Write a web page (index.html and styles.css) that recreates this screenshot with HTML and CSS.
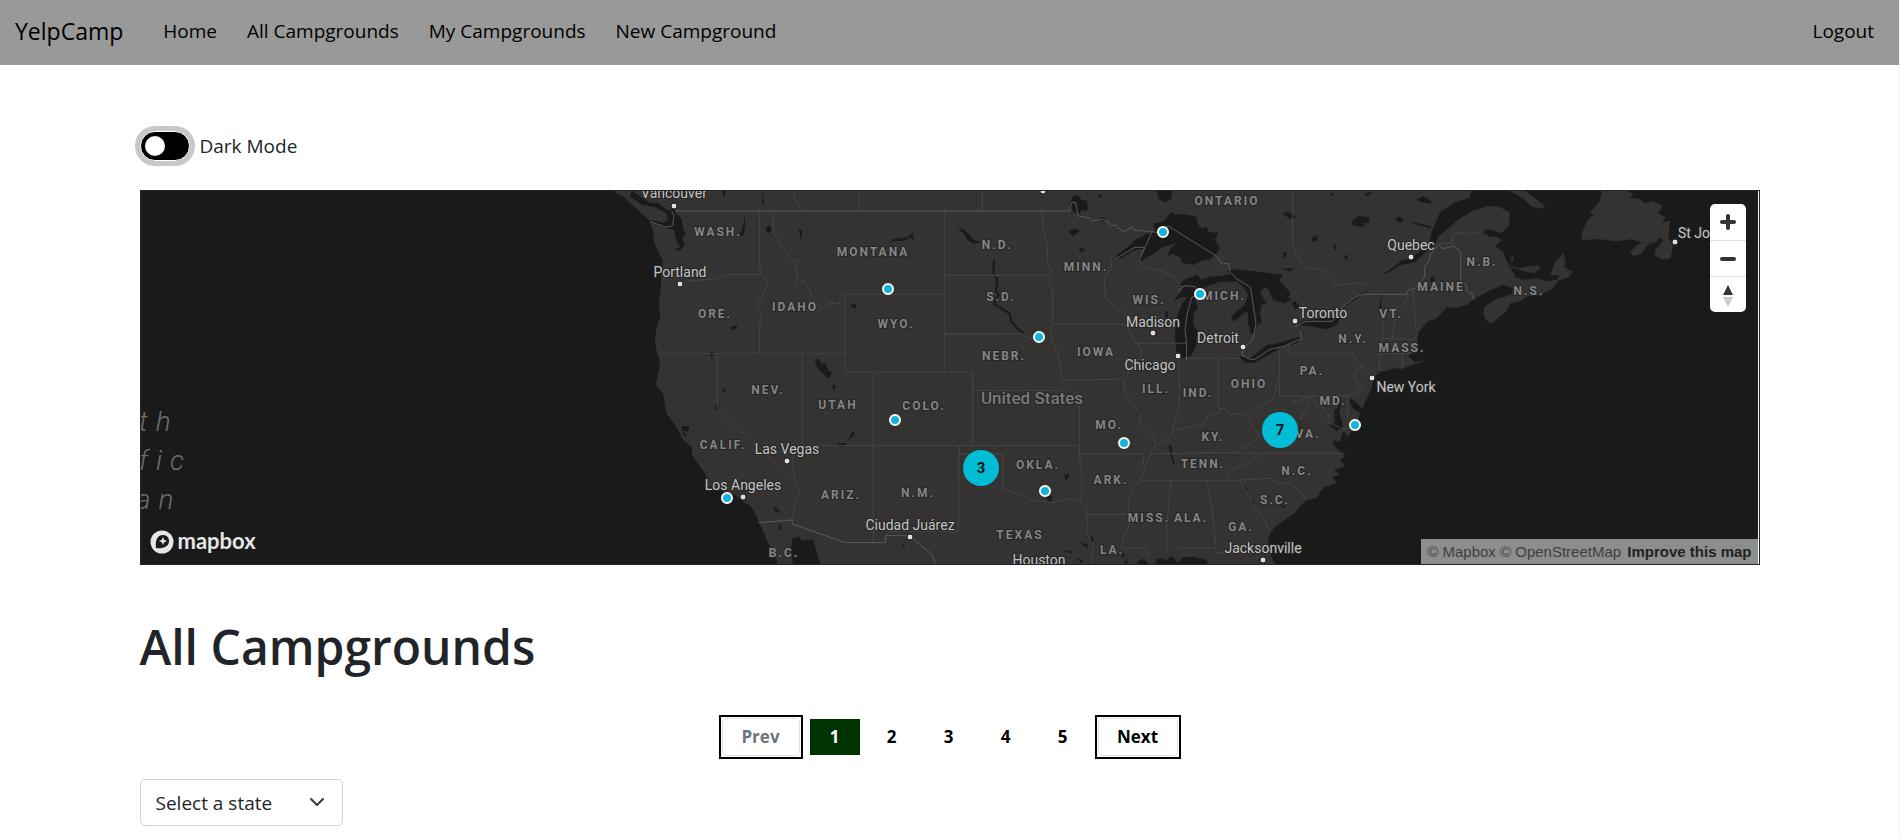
FILE: index.html
```html
<!DOCTYPE html>
<html lang="en">
<head>
<meta charset="utf-8">
<title>YelpCamp</title>
<link rel="stylesheet" href="styles.css">
</head>
<body>
<nav class="navbar">
  <a class="brand" href="#">YelpCamp</a>
  <a class="nav-link" href="#">Home</a>
  <a class="nav-link" href="#">All Campgrounds</a>
  <a class="nav-link" href="#">My Campgrounds</a>
  <a class="nav-link" href="#">New Campground</a>
  <a class="nav-link logout" href="#">Logout</a>
</nav>
<main class="container">
  <div class="mode">
    <input class="switch" type="checkbox" id="dark-mode">
    <label for="dark-mode">Dark Mode</label>
  </div>

  <section class="map" aria-label="Campground map">
    <svg class="map-canvas" width="1620" height="375" viewBox="140 190 1620 375">
      <!-- land -->
      <g class="land">
        <path d="M613 190L617 194L624 197L630 203L638 210L650 221L651 226L653 231L654 242L660 256L663 260L661 275L661 288L659 302L660 318L656 330L655 342L657 353L660 361L659 370L656 382L657 387L663 393L665 405L666 413L673 422L680 433L683 440L692 447L692 455L699 465L706 475L707 487L715 487L725 492L734 494L743 502L750 505L755 513L758 520L764 533L768 543L774 552L778 565H1275L1270 553L1268 540L1271 531L1278 525L1286 519L1295 513L1301 505L1307 500L1317 498L1321 491L1325 487L1337 483L1332 477L1340 475L1334 470L1345 466L1340 460L1346 455L1342 447L1345 440L1350 433L1357 427L1360 413L1352 408L1349 398L1356 402L1362 409L1367 398L1372 387L1373 380L1377 374L1390 371L1404 368L1427 360L1415 362L1408 356L1417 350L1418 333L1427 322L1437 318L1447 307L1456 308L1467 305L1472 300L1487 292L1507 283L1515 275L1510 268L1503 252L1495 246L1502 240L1490 234L1483 230L1500 234L1509 226L1510 213L1500 207L1488 206L1472 211L1458 220L1440 235L1429 244L1431 234L1440 212L1456 202L1469 198L1472 190Z"/>
        <g transform="translate(1400 180) scale(.3333)">
          <path d="M305 305L325 285L345 290L370 300L410 295L440 304L475 298L468 315L450 330L420 345L380 350L365 362L330 370L318 395L275 430L262 424L250 405L253 380L290 357L335 343L340 325L310 315ZM490 220L497 245L492 262L518 275L505 292L470 304L478 285L450 287L465 245ZM336 224L342 240L330 246L334 258L355 264L418 256L420 264L402 280L372 274L330 260ZM325 32H375L400 50L436 78L430 86L395 80L370 55ZM605 32L600 60L590 75L570 98L580 106L565 118L545 160L546 180L600 178L650 184L695 178L725 187L705 200L690 218L700 228L725 222L738 200L752 190L770 186L775 172L790 180L764 212L765 228L790 240L812 235L820 190L805 175L810 122L785 128L797 112L775 100L788 78L760 62L735 70L720 58L690 52L700 42L680 32Z"/>
        </g>
      </g>
      <!-- lakes, rivers and gulfs -->
      <g class="water">
        <path transform="translate(600 180) scale(.3333)" d="M580 1155L572 1110L578 1075L600 1070L605 1082L640 1078L650 1118L662 1155ZM95 32L130 56L150 68L175 70L205 92L222 80L230 105L245 115L250 150L256 158L247 175L254 195L240 212L222 208L240 200L228 180L222 150L200 145L155 130L150 120L190 128L205 118L200 100L165 82L125 74L90 50ZM368 35L378 32L370 58ZM485 32L494 76L487 70ZM498 140L510 135L515 150L508 160L498 156ZM596 150L608 152L603 180ZM434 108L436 140L430 168L416 164L428 145ZM866 190L880 178L925 172L938 157L942 184L932 172L915 182L880 184ZM1072 148L1090 148L1112 166L1120 180L1144 186L1122 191L1102 180L1090 158ZM645 542L655 535L665 552L678 548L684 570L697 578L683 596L660 572L650 560ZM696 614L708 616L702 632ZM365 620L378 630L374 643ZM330 515L340 516L336 536ZM346 675L356 676L354 692L346 690ZM392 442L410 434L410 446L395 450ZM755 368L770 376L766 386L754 380ZM245 738L268 738L264 755L250 752L262 770L252 768L246 750ZM520 978L540 992L542 1000L525 994ZM532 1025L548 1048L540 1050ZM712 790L738 790L760 752L764 764L740 785L732 800L714 798ZM905 1088L917 1103L910 1105Z"/>
        <path transform="translate(900 180) scale(.3333)" d="M645 238L655 222L690 195L705 180L745 160L765 155L760 130L790 125L815 95L825 105L850 102L890 110L892 130L905 145L920 140L925 155L955 160L945 180L960 205L950 222L930 238L905 243L880 255L845 248L840 230L815 222L800 236L812 205L830 190L790 200L760 222L720 245L714 238L738 205L700 212L665 235ZM820 365L850 325L835 325L850 300L890 285L905 300L930 290L985 285L1010 290L1008 305L960 305L925 318L900 330L885 350L893 385L882 400L880 430L892 455L888 500L875 525L850 540L830 520L825 470L828 420L845 375L862 350L842 352ZM980 272L1000 268L1050 272L1100 278L1150 285L1138 300L1172 340L1165 350L1175 360L1150 370L1120 360L1105 330L1092 320L1080 340L1100 368L1085 375L1080 400L1085 425L1068 440L1066 460L1052 462L1048 440L1042 425L1045 395L1030 400L1005 425L992 415L1008 395L1032 378L1045 345L1030 320L1005 300ZM1015 528L1050 535L1075 515L1100 495L1140 488L1180 475L1205 470L1190 490L1150 500L1100 528L1060 550L1035 548ZM508 75L518 48L535 45L545 60L560 62L565 85L555 95L545 88L540 102L520 95ZM505 155L525 145L540 152L520 168ZM590 44L605 44L605 56ZM770 32H815L815 55L795 68L775 55ZM534 202L555 208L545 220ZM796 392L804 395L803 415L796 412ZM590 120L610 112L622 122L605 124ZM806 795L815 798L816 825L825 850L818 852L812 825ZM485 890L508 880L505 888L496 905L495 890ZM440 940L458 952L452 968L442 960ZM540 1085L565 1095L560 1105ZM570 1070L580 1072L578 1098ZM488 1110L520 1115L510 1120ZM530 1135L548 1140L545 1150ZM712 1155L715 1142L732 1136L748 1155ZM764 1155L770 1138L790 1134L796 1144L815 1128L835 1148L850 1132L880 1130L920 1140L925 1155ZM662 1125L675 1122L672 1135ZM672 1150L678 1136L686 1150ZM710 700L721 694L712 708Z"/>
        <path class="river" transform="translate(900 180) scale(.3333)" d="M282 242L280 280L292 300L288 330L296 345L282 372L300 382L328 400L335 425L352 445L370 460"/>
        <path transform="translate(1200 180) scale(.3333)" d="M292 430L320 420L370 415L425 408L410 435L380 448L340 440L305 436ZM275 370L285 362L300 380L285 388ZM248 100L265 96L290 112L270 118ZM455 125L475 108L510 112L505 130L490 126L495 140L460 138ZM585 115L600 110L612 122L600 130ZM650 58L670 48L690 60L698 72L660 66ZM635 125L690 138L695 146L645 133ZM335 175L350 165L352 180L340 186ZM398 190L410 198L405 214ZM430 232L442 222L444 242ZM250 215L262 220L255 236L250 228ZM242 266L285 264L270 274ZM390 40L400 38L397 50ZM494 40L518 36L500 50ZM548 282L580 262L608 240L630 238L700 180L720 160L706 190L645 246L600 256L565 278ZM420 385L465 352L518 322L490 342L440 375ZM542 342L550 344L546 400L552 412L543 412L538 385ZM412 655L424 650L418 700L430 740L410 752L385 735L405 728L402 690L415 685ZM400 780L420 785L430 755L440 762L436 830L400 795ZM845 155L865 148L900 158L900 172L870 170ZM130 915L145 930L135 935ZM150 955L165 965L160 975ZM232 968L255 978L250 985ZM528 576L560 572L600 562L590 572L550 580ZM690 290L704 290L704 306L692 306Z"/>
      </g>
      <!-- state lines -->
      <g class="borders">
        <path transform="translate(600 180) scale(.3333)" d="M479 94V262L484 282L503 305L495 330L470 382L478 392L484 420L479 436V520M484 283H390L340 298L270 302L250 312M520 94V160L536 178L535 192L552 205L577 240L594 242L587 270L593 282L588 310L598 312L610 300L630 330L636 350L660 385L690 370L718 372L720 358L735 370M172 520H735M735 343H1033M735 343V577H1118M1033 94V577M1033 286H1200M1033 462H1200M352 520V690L583 898M583 898L578 830V797M607 520V797H1200M820 577V1088M1118 577V797M1078 797V822H1200M1078 797L1075 1054H858M583 898L602 940L588 955L577 1020M583 32V55L605 92M778 32V92M1147 32V92"/>
        <path transform="translate(900 180) scale(.3333)" d="M247 32V92M425 94L430 150L440 190L444 250L455 275L442 300L458 330V433M134 286H450M134 462H365L385 475L440 478L460 490L455 465L450 440L458 433H680M460 490L475 525L485 590L500 615L525 640L538 655V797M490 600L660 598L670 605M635 240V265L612 290L616 355L650 385L680 405L685 433L690 460L710 490L725 510L720 535L695 555L685 580L672 605L675 640L715 695L720 730L760 765L768 795L752 822L740 850L720 900L700 930L685 965V1000L690 1030L668 1080L665 1105H740L742 1125M720 245L730 260L790 275L825 290L838 320L858 318M710 490H860M838 535V680L822 735M840 535H1018M955 535V685L975 685L990 705L1025 700L1048 712L1068 690L1090 675L1120 655L1135 600M1048 712L1055 740L1080 765L1040 800L1010 817M822 752L850 745L885 735L905 740L925 705L955 700L960 685M822 735L815 765L790 785L768 795M752 822L1010 817M538 797V822H730V850H715M538 822L545 880V970L560 980L558 1003H688M560 1003L562 1060L580 1095L575 1150M218 577V797M218 632H480M218 797H538M180 822H308V925L350 940L390 960L430 965L460 968L510 955L545 970M720 902H1020M813 902L800 1040V1120M922 902L940 1020L948 1105M835 1105H948M948 1118L1080 1120M975 895L990 875L1050 845L1088 820M1020 902L1040 935L1070 990L1095 1020L1105 1050L1120 1055"/>
        <path transform="translate(1200 180) scale(.3333)" d="M278 32V190L285 215L315 262L370 270L395 295L400 312L430 315L465 308L500 315M268 492V520H460L472 545L485 558L465 580L465 600L488 625L465 640L445 648H238M238 505V648M282 648V672L300 660L325 650L345 665L375 690L390 710L380 725L425 745L450 745M300 720L330 665M443 648V715M485 558L528 580M546 344L548 470L538 520V575M548 475L640 478L655 465M538 520H608V570M608 520L640 518M625 345L612 370L588 385L578 475M640 330L645 440L655 455M0 817L187 820H435M118 900L215 895L228 910H275L322 960M720 190L755 190L760 160L800 158L800 165L850 152"/>
      </g>
      <!-- country lines -->
      <g class="frontier">
        <path transform="translate(600 180) scale(.3333)" d="M225 93H1410M150 125L200 142L218 137L222 105L214 92M475 1028L577 1020V1032L735 1088H857V1067H928L998 1125L1005 1152"/>
        <path transform="translate(900 180) scale(.3333)" d="M510 92L514 68H527L535 108L570 115L575 123L610 118L625 125L632 140L645 135L668 155L698 142L702 150L770 157L805 138L952 230L965 252L985 250L990 275L1008 295L1052 322L1068 430L1060 475L1048 490L1030 500L1026 525L1050 538L1065 538L1110 508L1150 500L1205 475L1200 452M645 238L705 202H735L755 158M735 202L716 245M835 330L855 317L885 320L900 345L875 352L862 400L855 450L860 490V540"/>
        <path transform="translate(1200 180) scale(.3333)" d="M285 438L320 424H398L430 378L468 350L490 343H620L625 330L645 325L675 290L674 260L688 240L690 225L717 194L728 206L762 198L782 216V300L798 315L802 335L815 340L822 360"/>
      </g>

      <g class="state">
        <text x="718" y="236">WASH.</text><text x="873" y="256">MONTANA</text><text x="715" y="318">ORE.</text>
        <text x="795" y="311">IDAHO</text><text x="896" y="328">WYO.</text><text x="768" y="394">NEV.</text>
        <text x="838" y="409">UTAH</text><text x="924" y="410">COLO.</text><text x="723" y="449">CALIF.</text>
        <text x="841" y="499">ARIZ.</text><text x="918" y="497">N.M.</text><text x="784" y="557">B.C.</text>
        <text x="997" y="249">N.D.</text><text x="1001" y="301">S.D.</text><text x="1086" y="271">MINN.</text>
        <text x="1004" y="360">NEBR.</text><text x="1096" y="356">IOWA</text><text x="1149" y="304">WIS.</text>
        <text x="1224" y="300">MICH.</text><text x="1227" y="205">ONTARIO</text><text x="1156" y="393">ILL.</text>
        <text x="1198" y="397">IND.</text><text x="1249" y="388">OHIO</text><text x="1109" y="429">MO.</text>
        <text x="1213" y="441">KY.</text><text x="1203" y="468">TENN.</text><text x="1038" y="469">OKLA.</text>
        <text x="1111" y="484">ARK.</text><text x="1149" y="522">MISS.</text><text x="1191" y="522">ALA.</text>
        <text x="1020" y="539">TEXAS</text><text x="1112" y="554">LA.</text><text x="1241" y="531">GA.</text>
        <text x="1275" y="504">S.C.</text><text x="1297" y="475">N.C.</text><text x="1308" y="438">VA.</text>
        <text x="1333" y="405">MD.</text><text x="1312" y="375">PA.</text><text x="1353" y="343">N.Y.</text>
        <text x="1402" y="352">MASS.</text><text x="1391" y="318">VT.</text><text x="1441" y="291">MAINE</text>
        <text x="1482" y="266">N.B.</text><text x="1529" y="295">N.S.</text>
      </g>
      <text class="country" x="1032" y="404">United States</text>
      <g class="marine">
        <text x="139" y="431">th</text><text x="139" y="470">fic</text><text x="136" y="509">an</text>
      </g>
      <g class="city">
        <text x="674" y="198">Vancouver</text><text x="680" y="277">Portland</text><text x="787" y="454">Las Vegas</text>
        <text x="743" y="490">Los Angeles</text><text x="910" y="530">Ciudad Juárez</text><text x="1153" y="327">Madison</text>
        <text x="1150" y="370">Chicago</text><text x="1218" y="343">Detroit</text><text x="1323" y="318">Toronto</text>
        <text x="1411" y="250">Quebec</text><text x="1406" y="392">New York</text><text x="1263" y="553">Jacksonville</text>
        <text x="1039" y="565">Houston</text><text x="1706" y="238">St John’s</text>
      </g>
      <g class="city-dot">
        <circle cx="674" cy="206" r="3"/><circle cx="680" cy="284" r="3"/><circle cx="787" cy="461" r="3"/>
        <circle cx="743" cy="497" r="3"/><circle cx="910" cy="537" r="3"/><circle cx="1153" cy="333" r="3"/>
        <circle cx="1178" cy="356" r="3"/><circle cx="1243" cy="347" r="3"/><circle cx="1295" cy="321" r="3"/>
        <circle cx="1411" cy="257" r="3"/><circle cx="1372" cy="378" r="3"/><circle cx="1263" cy="560" r="3"/>
        <circle cx="1675" cy="242" r="3"/><circle cx="1043" cy="191" r="3"/>
      </g>
      <g class="camp">
        <circle cx="888" cy="289" r="5"/><circle cx="895" cy="420" r="5"/><circle cx="727" cy="498" r="5"/>
        <circle cx="1163" cy="232" r="5"/><circle cx="1200" cy="294" r="5"/><circle cx="1039" cy="337" r="5"/>
        <circle cx="1124" cy="443" r="5"/><circle cx="1045" cy="491" r="5"/><circle cx="1355" cy="425" r="5"/>
      </g>
      <g class="cluster">
        <circle cx="981" cy="468" r="18"/><circle cx="1280" cy="430" r="18"/>
        <text x="981" y="473">3</text><text x="1280" y="435">7</text>
      </g>
    </svg>
    <a class="map-logo" href="#" aria-label="Mapbox">
      <svg width="24" height="24" viewBox="0 0 24 24">
        <circle cx="12" cy="12" r="11.500" fill="#e6e6e6"/>
        <path d="M6 18C5 11 7 5 13 5C17 5 19 8 19 11C19 17 12 19 6 18Z" fill="#1a1b1a"/>
        <path d="M13 7L14.200 9.800L17 11L14.200 12.200L13 15L11.800 12.200L9 11L11.800 9.800Z" fill="#e6e6e6"/>
      </svg>
      <span>mapbox</span>
    </a>
    <div class="map-controls">
      <button type="button" aria-label="Zoom in"><svg width="36" height="36" viewBox="0 0 36 36"><path class="sign" d="M12 18H24M18 12V24"/></svg></button>
      <button type="button" aria-label="Zoom out"><svg width="36" height="36" viewBox="0 0 36 36"><path class="sign" d="M12 18H24"/></svg></button>
      <button type="button" aria-label="Reset bearing to north"><svg width="36" height="36" viewBox="0 0 36 36"><path d="M13 18L18 8L23 18Z" fill="#333"/><path d="M13 20L18 30L23 20Z" fill="#ccc"/></svg></button>
    </div>
    <div class="attribution">
      <a href="#">© Mapbox</a> <a href="#">© OpenStreetMap</a> <a class="improve" href="#">Improve this map</a>
    </div>
  </section>

  <h1>All Campgrounds</h1>

  <nav class="pages" aria-label="Pages">
    <button class="step" type="button" disabled><span>Prev</span></button>
    <button class="page current" type="button">1</button>
    <button class="page" type="button">2</button>
    <button class="page" type="button">3</button>
    <button class="page" type="button">4</button>
    <button class="page" type="button">5</button>
    <button class="step next" type="button"><span>Next</span></button>
  </nav>

  <div class="state-select">
    <select aria-label="State"><option>Select a state</option></select>
    <svg class="chevron" width="16" height="16" viewBox="0 0 16 16"><path d="M2 5L8 11L14 5"/></svg>
  </div>
</main>
</body>
</html>
```
FILE: styles.css
```css
* {
  box-sizing: border-box;
}

body {
  margin: 0;
  border-right: 1px solid #f0f0f0;
  background: #fff;
  color: #212529;
  font-family: "Open Sans", "Noto Sans", sans-serif;
  font-size: 19px;
  line-height: 30px;
}

a {
  color: inherit;
  text-decoration: none;
}

button,
select {
  font: inherit;
  color: inherit;
}

.navbar {
  display: flex;
  align-items: center;
  gap: 30px;
  height: 65px;
  padding: 0 25px 4px 15px;
  background: #999;
  color: #000;
}

.brand {
  margin-right: 10px;
  font-size: 23px;
}

.logout {
  margin-left: auto;
}

.container {
  max-width: 1650px;
  margin: 0 auto;
  padding: 66px 15px 10px;
}

.mode {
  display: flex;
  align-items: center;
  gap: 10px;
  height: 30px;
  margin-bottom: 29px;
}

.switch {
  appearance: none;
  width: 50px;
  height: 30px;
  margin: 0;
  padding: 4px;
  border: 1px solid #fff;
  border-radius: 15px;
  background: #000;
  box-shadow: 0 0 0 5px #c8c8c8;
}

.switch::before {
  content: "";
  display: block;
  width: 20px;
  height: 20px;
  border-radius: 50%;
  background: #fff;
}

.switch:checked::before {
  margin-left: auto;
}

.map {
  position: relative;
  height: 375px;
  overflow: hidden;
  border: 1px solid #212529;
  background: #191a1a;
  box-shadow: inset -1px 0 #fff;
}

.map-canvas {
  position: absolute;
  top: -1px;
  left: calc(50% - 810px);
  font-family: Roboto, sans-serif;
}

.land {
  fill: #343332;
}

.water {
  fill: #191a1a;
}

.river {
  fill: none;
  stroke: #191a1a;
  stroke-width: 6;
}

.borders,
.frontier {
  fill: none;
  stroke: #454443;
  stroke-width: 3;
}

.frontier {
  stroke: #5c5b5a;
}

.state,
.country,
.city {
  text-anchor: middle;
  paint-order: stroke;
  stroke: #252525;
  stroke-width: 2px;
  stroke-linejoin: round;
}

.state {
  fill: #858585;
  font-size: 12px;
  font-weight: 700;
  letter-spacing: 2px;
}

.country {
  fill: #7a7a7a;
  font-size: 17px;
  font-weight: 500;
}

.marine {
  fill: #6e6e6e;
  font-size: 28px;
  font-style: italic;
  font-weight: 300;
  letter-spacing: 8px;
}

.city {
  fill: #c4c4c4;
  font-size: 14px;
}

.city-dot {
  fill: #dedede;
  stroke: #191a1a;
}

.camp {
  fill: #11b4da;
  stroke: #fff;
  stroke-width: 2;
}

.cluster {
  fill: #00bcd4;
}

.cluster text {
  fill: #111;
  font-size: 15px;
  font-weight: 700;
  text-anchor: middle;
}

.map-logo {
  position: absolute;
  bottom: 9px;
  left: 9px;
  display: flex;
  align-items: center;
  gap: 4px;
  color: #e6e6e6;
  font: 700 22px/24px Lato, sans-serif;
}

.map-logo span {
  padding-bottom: 2px;
}

.map-controls {
  position: absolute;
  top: 13px;
  right: 13px;
  display: flex;
  flex-direction: column;
  overflow: hidden;
  border-radius: 5px;
  background: #fff;
}

.map-controls button {
  width: 36px;
  height: 36px;
  padding: 0;
  border: 0;
  background: none;
}

.map-controls button + button {
  border-top: 1px solid #ddd;
}

.map-controls svg {
  display: block;
}

.sign {
  fill: none;
  stroke: #333;
  stroke-width: 4;
  stroke-linecap: round;
}

.attribution {
  position: absolute;
  right: 1px;
  bottom: 0;
  padding: 0 6px;
  background: rgba(255, 255, 255, 0.5);
  color: #404040;
  font: 15px/25px "Liberation Sans", Arial, sans-serif;
}

.improve {
  margin-left: 2px;
  color: #222;
  font-weight: 700;
}

h1 {
  margin: 49px 0 36px;
  font-size: 48px;
  font-weight: 600;
  line-height: 65px;
}

.pages {
  display: flex;
  justify-content: center;
  align-items: center;
  gap: 7px;
  color: #000;
  font-size: 17px;
  font-weight: 700;
}

.page {
  width: 50px;
  height: 36px;
  padding: 0;
  border: 0;
  background: none;
}

.current {
  background: #030;
  color: #fff;
}

.step {
  width: 84px;
  height: 44px;
  padding: 1px;
  border: 2px solid #000;
  background: #fff;
}

.step span {
  display: grid;
  place-items: center;
  height: 38px;
  border: 1px solid #dee2e6;
  border-radius: 5px;
}

.step:disabled {
  color: #6c757d;
}

.next {
  width: 86px;
}

.state-select {
  position: relative;
  width: 203px;
  margin-top: 20px;
}

.state-select select {
  appearance: none;
  display: block;
  width: 100%;
  height: 47px;
  padding: 0 45px 0 15px;
  border: 1px solid #ced4da;
  border-radius: 5px;
  background: #fff;
}

.chevron {
  position: absolute;
  top: 15px;
  right: 18px;
  fill: none;
  stroke: #343a40;
  stroke-width: 2;
  stroke-linecap: round;
  stroke-linejoin: round;
  pointer-events: none;
}
```
